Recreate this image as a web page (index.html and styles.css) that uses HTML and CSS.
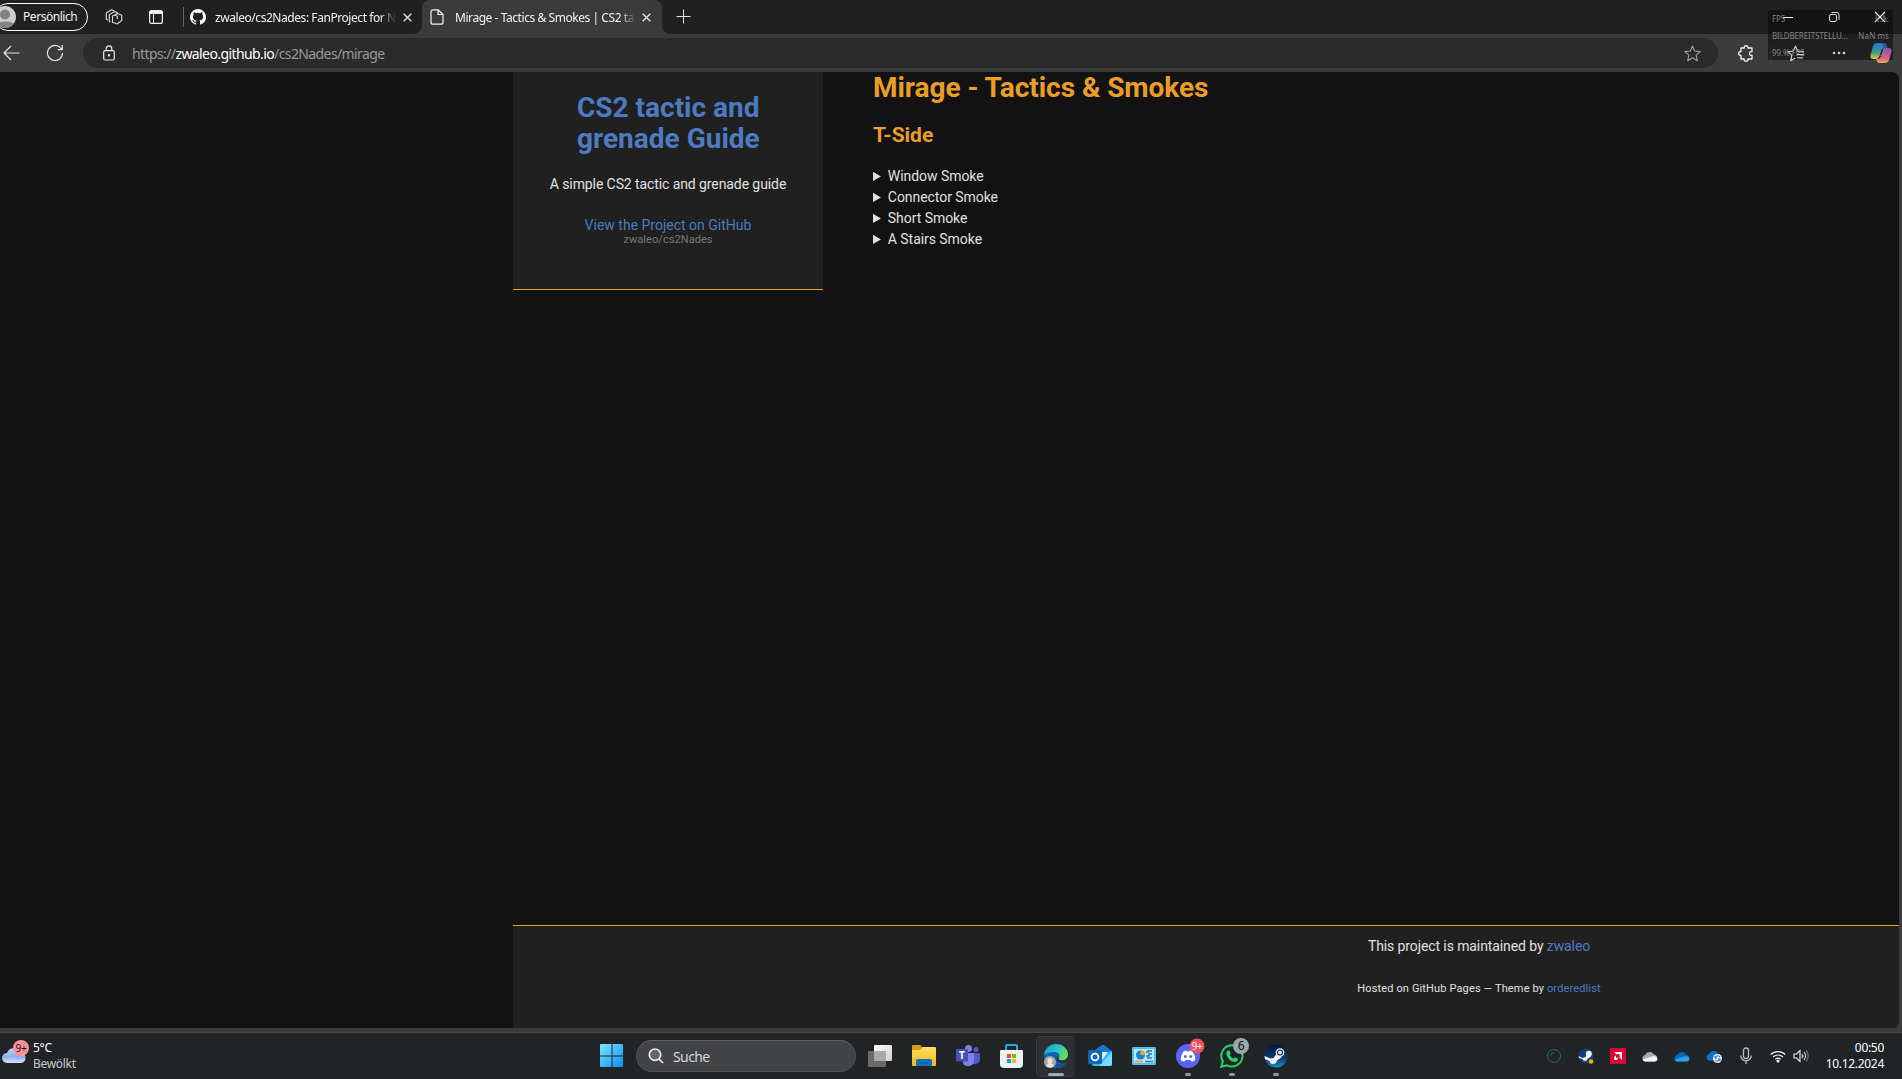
FILE: index.html
```html
<!DOCTYPE html>
<html lang="de">
<head>
<meta charset="utf-8">
<title>Mirage - Tactics &amp; Smokes | CS2 tactic and grenade Guide</title>
<link rel="stylesheet" href="styles.css">
</head>
<body>
<div class="desktop">
  <header class="tabstrip">
    <div class="profile">
      <svg class="avatar" width="22" height="22" viewBox="0 0 22 22"><circle cx="11" cy="11" r="11" fill="#cfcdca"/><circle cx="11" cy="8.5" r="5" fill="#858381"/><path d="M2.5 18c1-3.500 16-3.500 17 0A11 11 0 0 1 2.500 18z" fill="#858381"/></svg>
      <span class="profile-name">Persönlich</span>
    </div>
    <svg class="workspaces" width="18" height="18" viewBox="0 0 18 18" fill="none" stroke="#dcdcdc" stroke-width="1.1" stroke-linejoin="round"><path d="M7.500 8l5-2.500 4.200 1.700v5.300L12 16l-4.500-1.700zM9.500 7l2.800 1.200v3M5.500 14l-1.200-.6V6.600L9.500 3.500l3.500 1.400M3 12l-1.700-.8V5L6.500 1.700l3 1.200"/></svg>
    <svg class="tabactions" width="16" height="16" viewBox="0 0 16 16"><rect x="1.600" y="1.600" width="12.800" height="12.800" rx="2" fill="none" stroke="#eee" stroke-width="1.200"/><path d="M1.500 3.500q0-2 2-2h9q2 0 2 2V5h-13z" fill="#eee"/><path d="M5.500 5v9" stroke="#eee"/></svg>
    <i class="divider"></i>
    <div class="tab">
      <svg width="16" height="16" viewBox="0 0 16 16"><path fill="#fff" d="M8 0a8 8 0 0 0-2.530 15.590c.4.070.55-.17.55-.38v-1.490c-2.010.37-2.530-.49-2.690-.94-.09-.23-.48-.94-.82-1.130-.28-.15-.68-.52-.01-.53.63-.01 1.080.58 1.230.82.720 1.210 1.870.87 2.330.66.070-.52.280-.87.510-1.070-1.780-.2-3.640-.89-3.640-3.950 0-.87.31-1.590.82-2.150-.08-.2-.36-1.020.08-2.120 0 0 .67-.21 2.200.82a7.400 7.400 0 0 1 4 0c1.530-1.040 2.200-.82 2.200-.82.440 1.100.160 1.920.080 2.120.51.560.82 1.270.82 2.150 0 3.070-1.870 3.750-3.650 3.950.29.250.54.730.54 1.480v2.200c0 .21.150.46.550.38A8 8 0 0 0 8 0z"/></svg>
      <span class="tab-title">zwaleo/cs2Nades: FanProject for N</span>
      <svg class="close" width="9" height="9" viewBox="0 0 9 9"><path d="M.7.700l7.600 7.600M8.300.7L.7 8.300" stroke="#e8e8e8" stroke-width="1.300"/></svg>
    </div>
    <div class="tab active">
      <svg width="14" height="16" viewBox="0 0 14 16" fill="none" stroke="#f4f4f4" stroke-width="1.200"><path d="M8 .8H3Q1 .8 1 2.800v10.400q0 2 2 2h8q2 0 2-2V5.500zM8 .8v4.700h5" stroke-linejoin="round"/></svg>
      <span class="tab-title">Mirage - Tactics &amp; Smokes | CS2 ta</span>
      <svg class="close" width="9" height="9" viewBox="0 0 9 9"><path d="M.7.700l7.600 7.600M8.300.7L.7 8.300" stroke="#e8e8e8" stroke-width="1.300"/></svg>
    </div>
    <svg class="newtab" width="15" height="15" viewBox="0 0 15 15"><path d="M7.500.5v14M.5 7.500h14" stroke="#e0e0e0"/></svg>
    <div class="window-controls">
      <svg width="46" height="34" viewBox="0 0 46 34"><path d="M18 17.500h10" stroke="#eee"/></svg>
      <svg width="46" height="34" viewBox="0 0 46 34" fill="none" stroke="#d8d8d8"><rect x="18.500" y="14.500" width="7" height="7" rx="1.500"/><path d="M20.500 12.500h5.500q2 0 2 2v5.500"/></svg>
      <svg width="46" height="34" viewBox="0 0 46 34"><path d="M18 12l10 10M28 12L18 22" stroke="#f2f2f2" stroke-width="1.100"/></svg>
    </div>
  </header>

  <nav class="toolbar">
    <svg class="back" width="17" height="16" viewBox="0 0 17 16" fill="none" stroke="#e6e6e6" stroke-width="1.200"><path d="M16.500 8H1M8 1L1 8l7 7"/></svg>
    <svg class="reload" width="18" height="18" viewBox="0 0 18 18" fill="none" stroke="#e6e6e6" stroke-width="1.200"><path d="M16.500 9A7.500 7.500 0 1 1 14 3.400L16 5.500M16.200 1v4.700h-4.500"/></svg>
    <div class="address">
      <svg width="12" height="16" viewBox="0 0 12 16" fill="none" stroke="#ececec" stroke-width="1.200"><rect x=".7" y="5.700" width="10.600" height="9.300" rx="1.500"/><path d="M3.200 5.500V3.700a2.800 2.800 0 0 1 5.600 0v1.800"/><circle cx="6" cy="10.300" r=".6" fill="#ececec"/></svg>
      <span class="url">https://<b>zwaleo.github.io</b>/cs2Nades/mirage</span>
      <svg class="star" width="17" height="17" viewBox="0 0 17 17" fill="none" stroke="#a2a2a2" stroke-width="1.100" stroke-linejoin="round"><path d="M8.500 1l2.200 5 5.500.6-4.100 3.600 1.200 5.500-4.800-2.900-4.800 2.900 1.200-5.500L.8 6.600 6.300 6z"/></svg>
    </div>
    <svg class="puzzle" width="16" height="17" viewBox="0 0 16 17" fill="none" stroke="#f2f2f2" stroke-width="1.300" stroke-linejoin="round"><path d="M3 3h3.200c-.5-3 4.200-3 3.800 0H14v3.500c-3.300-.2-3.300 4.200 0 4V14h-4c.4 3-4.300 3-3.800 0H3v-3.500c-3.200.2-3.200-4.200 0-4z"/></svg>
    <i class="tool-divider"></i>
    <svg class="favorites" width="18" height="17" viewBox="0 0 18 17" fill="none" stroke="#c9c9c9" stroke-width="1.200" stroke-linejoin="round"><path d="M17 6.600H10.800L8.500 1 6.300 6 .8 6.600l4.100 3.600-1.200 5.500 4.500-2.700M10 9.700h7M10 12.800h6"/></svg>
    <svg class="dots" width="14" height="4" viewBox="0 0 14 4" fill="#cfcfcf"><circle cx="2" cy="2" r="1.300"/><circle cx="7" cy="2" r="1.300"/><circle cx="12" cy="2" r="1.300"/></svg>
    <svg class="copilot" width="22" height="20" viewBox="0 0 22 20"><defs><linearGradient id="ca" x2="0" y2="1"><stop stop-color="#2477d1"/><stop offset=".55" stop-color="#289d80"/><stop offset="1" stop-color="#d8d238"/></linearGradient><linearGradient id="cb" x2="0" y2="1"><stop stop-color="#8d48c7"/><stop offset=".6" stop-color="#da568b"/><stop offset="1" stop-color="#f3a35c"/></linearGradient></defs><path d="M6 0h8q2 0 3 4l-5 2-3 8q-1 2-3 2H3q-3 0-2.500-4L3 3q1-3 3-3z" fill="url(#ca)"/><path d="M12 0h3q1.500 0 2.500 5l-3.500 1z" fill="#2a52ae"/><path d="M15 5h4q3 0 2.500 4L19 17q-1 3-3 3H9q-2 0-3-4h2q2 0 3-3l2-6q.5-2 2-2z" fill="url(#cb)"/></svg>
  </nav>

  <div class="viewport">
    <div class="wrapper">
      <aside class="sidebar">
        <h1>CS2 tactic and grenade Guide</h1>
        <p class="tagline">A simple CS2 tactic and grenade guide</p>
        <p class="view"><a>View the Project on GitHub <small>zwaleo/cs2Nades</small></a></p>
      </aside>
      <section class="content">
        <h1>Mirage - Tactics &amp; Smokes</h1>
        <h2>T-Side</h2>
        <details><summary>Window Smoke</summary></details>
        <details><summary>Connector Smoke</summary></details>
        <details><summary>Short Smoke</summary></details>
        <details><summary>A Stairs Smoke</summary></details>
      </section>
    </div>
    <footer class="footer">
      <p class="maintained">This project is maintained by <a>zwaleo</a></p>
      <p class="hosted">Hosted on GitHub Pages — Theme by <a>orderedlist</a></p>
    </footer>
  </div>

  <footer class="taskbar">
    <div class="weather">
      <svg width="31" height="24" viewBox="0 0 31 24"><defs><linearGradient id="w" x2="0" y2="1"><stop stop-color="#b9d2f7"/><stop offset=".6" stop-color="#8fb2ea"/><stop offset="1" stop-color="#d7e5fb"/></linearGradient></defs><path d="M7 23a5 5 0 0 1 0-10A7.500 7.500 0 0 1 21 12.500 5.300 5.300 0 0 1 21 23z" fill="url(#w)"/><circle cx="21" cy="8" r="8" fill="#ff8f98"/><text x="21" y="12" class="badge-text dark">9+</text></svg>
      <div class="weather-text"><span>5°C</span><span class="dim">Bewölkt</span></div>
    </div>
    <div class="app start"><svg width="24" height="24" viewBox="0 0 24 24"><defs><linearGradient id="win" x2="1" y2="1"><stop stop-color="#7be9ff"/><stop offset="1" stop-color="#0a8df5"/></linearGradient></defs><path fill="url(#win)" d="M1 0h10.500v11.500H0V1q0-1 1-1zM12.500 0H22q1 0 1 1v10.500H12.500zM0 12.500h11.500V23H1q-1 0-1-1zM12.500 12.500H23V22q0 1-1 1h-9.500z"/></svg></div>
    <div class="search"><svg width="16" height="16" viewBox="0 0 16 16" fill="#66676c" stroke="#e9e9e9" stroke-width="1.700"><circle cx="7" cy="6.700" r="5.700"/><path d="M11 11l4 4"/></svg><span>Suche</span></div>
    <div class="app"><svg width="24" height="24" viewBox="0 0 24 24"><defs><linearGradient id="tv" x2="1" y2="1"><stop stop-color="#fff"/><stop offset="1" stop-color="#d0d0d0"/></linearGradient></defs><rect x="6" y="1" width="18" height="16" rx="1" fill="url(#tv)"/><rect y="7" width="18" height="16" rx="1" fill="#6a6a6a"/><rect x="6" y="7" width="12" height="10" fill="#aaa"/></svg></div>
    <div class="app"><svg width="24" height="24" viewBox="0 0 24 24"><defs><linearGradient id="fo" x2="0" y2="1"><stop stop-color="#ffdc66"/><stop offset="1" stop-color="#fbb917"/></linearGradient></defs><path d="M0 2q0-1 1-1h7l3 2.500V8H0z" fill="#dd9c0c"/><path d="M0 6h8l3-3h12q1 0 1 1v17q0 1-1 1H1q-1 0-1-1z" fill="url(#fo)"/><path d="M4 22v-5q0-2 2-2h12q2 0 2 2v5z" fill="#0b72c6"/><path d="M8 19h8" stroke="#07508f"/></svg></div>
    <div class="app"><svg width="24" height="24" viewBox="0 0 24 24"><circle cx="12.500" cy="4.500" r="3.500" fill="#7b83eb"/><circle cx="20" cy="5.500" r="2.500" fill="#5059c9"/><path d="M17 9h6q1 0 1 1v5q0 4-4 5h-3z" fill="#5059c9"/><path d="M8 9h10v7q0 6-6 6t-5-6z" fill="#7b83eb"/><rect y="5" width="12" height="12.500" rx="1" fill="#474eb7"/><text x="6" y="15" class="glyph">T</text></svg></div>
    <div class="app"><svg width="24" height="24" viewBox="0 0 24 24"><path d="M6 7V2q0-1 1-1h9q1 0 1 1v5" fill="none" stroke="#25a9e8" stroke-width="2"/><path d="M0 7q0-1 1-1h21q1 0 1 1v13q0 4-4 4H4q-4 0-4-4z" fill="#f1f1f1"/><path fill="#f04f22" d="M7 10h4v4H7z"/><path fill="#7fba00" d="M12 10h4v4h-4z"/><path fill="#00a4ef" d="M7 15h4v4H7z"/><path fill="#fdb900" d="M12 15h4v4h-4z"/></svg></div>
    <div class="app selected"><svg width="24" height="24" viewBox="0 0 24 24"><defs><linearGradient id="eg" x2="1" y2=".5"><stop stop-color="#1793d9"/><stop offset=".55" stop-color="#29c3c9"/><stop offset="1" stop-color="#66dd58"/></linearGradient></defs><circle cx="12" cy="12" r="12" fill="#0c65b4"/><path d="M0 11C1 4 6 0 12 0c7 0 12 5 12 10.500 0 4-3 6-6 6-2 0-4-1-3.500-2 2-2 1-6.500-4-6.500Q3 8 0 11z" fill="url(#eg)"/><path d="M10.500 10c-3 2-2 8 3 9.500 4 1 7 0 9-1.500l1-1v7H12z" fill="#155295"/><path d="M14.500 14.500c-.5 1 1.500 2 3.500 2 2 0 4-1 6-4v5l-1.500 1c-4 2-10 0-10-3q0-2 1-3.500 2 1.500 1 2.500z" fill="#2d2f33"/><path d="M22.500 18L24 17v7h-6.500q3.500-2 5-6z" fill="#2d2f33"/><circle cx="6" cy="18" r="6" fill="#a9a7a5"/><circle cx="6" cy="16.500" r="2.600" fill="#e3e1df"/><path d="M2.500 22q0-3 3.500-3t3.500 3q-3 3-7 0z" fill="#e3e1df"/></svg><i class="run wide"></i></div>
    <div class="app"><svg width="24" height="24" viewBox="0 0 24 24"><path d="M4 8l10-7q1-.7 2 0l8 6v13q0 2-2 2H6q-2 0-2-2z" fill="#1a78ce"/><path d="M4 15l9-3 11-5v13q0 2-2 2H6q-2 0-2-2z" fill="#39b9f4"/><path d="M11 22L24 8v12q0 2-2 2z" fill="#75dcff"/><path d="M14 8h6l-6 8z" fill="#d9f2ff"/><rect y="6" width="14" height="14" rx="1.500" fill="#0e66bd"/><circle cx="7" cy="13" r="3.400" fill="none" stroke="#fff" stroke-width="1.800"/></svg></div>
    <div class="app"><svg width="24" height="24" viewBox="0 0 24 24"><rect y="3" width="24" height="18" rx="1" fill="#53bce9"/><rect x="2" y="5" width="20" height="14" fill="#b9e6f8"/><circle cx="8.500" cy="11" r="4.500" fill="#1585d2"/><path d="M8.500 11V6a5 5 0 0 1 5 5z" fill="#f3a52d"/><path d="M14 8h2v-1h4M14 12h3v-2h3M15 14h5" stroke="#1c7cbc" fill="none" stroke-width="1.500"/><path d="M3 17.500h8" stroke="#e69a2e" stroke-width="1.500"/><path d="M13 17.500h8" stroke="#277eb2" stroke-width="1.500"/></svg></div>
    <div class="app"><svg width="24" height="24" viewBox="0 0 24 24"><circle cx="12" cy="12" r="12" fill="#5865f2"/><path d="M7.500 7.500q2-1 3-1l.5 1h2l.5-1q1 0 3 1 3 4 2.800 8.500-2 1.500-3.800 1.500L14.500 16h-5l-1 1.500q-2 0-3.800-1.500-.2-4.500 2.800-8.500z" fill="#fff"/><circle cx="9.300" cy="12.500" r="1.500" fill="#5865f2"/><circle cx="14.700" cy="12.500" r="1.500" fill="#5865f2"/></svg><svg class="badge" width="16" height="16" viewBox="0 0 16 16"><circle cx="8" cy="8" r="7.500" fill="#ee5158"/><text x="8" y="12" class="badge-text">9+</text></svg><i class="run"></i></div>
    <div class="app"><svg width="24" height="24" viewBox="0 0 24 24"><path d="M1.300 22.800l1.500-5.500A10.600 10.600 0 1 1 7 21.300z" fill="#202427" stroke="#25d366" stroke-width="2"/><path d="M7.500 6.500h2l1.300 3-1.200 1.500q1.300 2.500 4 3.800l1.400-1.600 3 1.500q0 3.300-3.500 3.300Q8 17 6.300 10q0-2.500 1.200-3.500z" fill="#25d366"/></svg><svg class="badge" width="16" height="16" viewBox="0 0 16 16"><circle cx="8" cy="8" r="8" fill="#9ba9ad"/><text x="8" y="12" class="badge-text dark six">6</text></svg><i class="run"></i></div>
    <div class="app"><svg width="24" height="24" viewBox="0 0 24 24"><defs><linearGradient id="st" x2="0" y2="1"><stop stop-color="#0a1735"/><stop offset=".6" stop-color="#0b3b73"/><stop offset="1" stop-color="#168fc9"/></linearGradient></defs><circle cx="12" cy="12" r="11.500" fill="url(#st)"/><path d="M.5 12l6 2.500 3-.5 3.500-5 5 4-5 3.500q-1 3.500-4 3.500t-3.500-3L.8 15z" fill="#f2f2f2"/><circle cx="16" cy="8.500" r="4.300" fill="#f2f2f2"/><circle cx="16" cy="8.500" r="2.500" fill="#e2e5e8" stroke="#173057" stroke-width="1.200"/></svg><i class="run"></i></div>
    <div class="tray">
      <span class="tray-item"><svg width="16" height="16" viewBox="0 0 16 16" fill="none" stroke="#22734a"><circle cx="8" cy="8" r="6.500"/><path d="M4.500 8A3.500 3.500 0 0 1 8 4.500"/></svg></span>
      <span class="tray-item"><svg width="16" height="16" viewBox="0 0 16 16"><circle cx="8" cy="8" r="7.500" fill="#133f75"/><path d="M.5 8l4 2 3-1 2-3.500 3.500 3-3.500 2.500q-.5 2-2.500 2t-2.500-2L1 10z" fill="#f2f2f2"/><circle cx="10.800" cy="5.700" r="3" fill="#f2f2f2"/><circle cx="13" cy="13.500" r="2.300" fill="#ecb016"/></svg></span>
      <span class="tray-item"><svg width="16" height="16" viewBox="0 0 16 16"><path d="M0 0h16v16H0z" fill="#dd0031"/><path d="M4 4h8v8l-2.300-2.300V6.300H6.300zM6 7.300v2.400h2.600L6.700 12H4V9.300z" fill="#fff"/></svg></span>
      <span class="tray-item"><svg width="16" height="11" viewBox="0 0 16 11"><path d="M3.500 10.500a3.300 3.300 0 0 1-.4-6.500A5 5 0 0 1 12 3.500a3.600 3.600 0 0 1 .5 7z" fill="#a9a9a9"/><path d="M3 10.500q-2-.5-2.500-2L10 5.500q5-1 5.500 2 0 3-3 3z" fill="#f4f4f4"/></svg></span>
      <span class="tray-item"><svg width="16" height="11" viewBox="0 0 16 11"><path d="M3.500 10.500a3.300 3.300 0 0 1-.4-6.500A5 5 0 0 1 12 3.500a3.600 3.600 0 0 1 .5 7z" fill="#0766b8"/><path d="M3 10.500q-2-.5-2.500-2L10 5.500q5-1 5.500 2 0 3-3 3z" fill="#29a0e8"/></svg></span>
      <span class="tray-item"><svg width="16" height="14" viewBox="0 0 16 14"><path d="M3.500 11.500a3.300 3.300 0 0 1-.4-6.500A5 5 0 0 1 12 4.500a3.600 3.600 0 0 1 .5 7z" fill="#0b73cc"/><circle cx="11.500" cy="9.500" r="4.500" fill="#e6f0f7"/><path d="M9 9a2.800 2.800 0 0 1 5-1M14 10a2.800 2.800 0 0 1-5 1M9 7v2h2M14 12v-2h-2" stroke="#1670bb" fill="none"/></svg></span>
      <span class="tray-item"><svg width="14" height="18" viewBox="0 0 14 18" fill="none" stroke="#b9bbbc" stroke-width="1.300"><rect x="4.500" y="1" width="5" height="10.500" rx="2.500"/><path d="M1.700 8.500a5.300 5.300 0 0 0 10.600 0M7 14v3"/></svg></span>
      <span class="tray-item wifi"><svg width="16" height="14" viewBox="0 0 16 14" fill="none" stroke="#f1f1f1" stroke-width="1.200"><path d="M.7 5.500a10.500 10.500 0 0 1 14.600 0M3 8a7.300 7.300 0 0 1 10 0M5.300 10.300a4 4 0 0 1 5.400 0"/><circle cx="8" cy="12" r="1" fill="#f1f1f1"/></svg></span>
      <span class="tray-item vol"><svg width="16" height="14" viewBox="0 0 16 14" fill="none" stroke="#f1f1f1" stroke-width="1.100"><path d="M1 5h2.500L7 1.500v11L3.500 9H1z"/><path d="M9 5a3 3 0 0 1 0 4M11 3a6 6 0 0 1 0 8"/><path d="M13 1.500a8 8 0 0 1 0 11" stroke="#777"/></svg></span>
      <div class="clock"><span>00:50</span><span>10.12.2024</span></div>
    </div>
  </footer>

  <div class="overlay">
    <span>FPS</span><span>k.A.</span>
    <span>BILDBEREITSTELLU...</span><span>NaN ms</span>
    <span>99.% FPS</span><span>k.A.</span>
  </div>
</div>
</body>
</html>
```
FILE: styles.css
```css
* { box-sizing: border-box; }
body { margin: 0; background: #3b3b3b; font-family: "Noto Sans", sans-serif; }
svg { display: block; flex: none; }
.desktop { position: relative; width: 1902px; height: 1079px; overflow: hidden; display: flex; flex-direction: column; }

.tabstrip { height: 34px; background: #202020; display: flex; align-items: center; color: #f2f2f2; font-size: 12px; flex: none; }
.profile { width: 94px; height: 28px; margin-left: -6px; margin-top: -1px; border: 1px solid #fff; border-radius: 14px; display: flex; align-items: center; flex: none; }
.avatar { margin-left: -1px; }
.profile-name { margin-left: 7px; letter-spacing: -0.45px; white-space: nowrap; }
.workspaces { margin-left: 17px; }
.tabactions { margin-left: 25px; }
.divider { width: 1px; height: 20px; background: #666; margin-left: 19px; }
.tab { width: 238px; height: 34px; display: flex; align-items: center; padding-left: 6px; flex: none; }
.tab-title { width: 182px; margin-left: 9px; overflow: hidden; white-space: nowrap; letter-spacing: -0.44px; mask-image: linear-gradient(90deg, #000 165px, transparent 181px); }
.close { margin-left: 6px; }
.tab.active { position: relative; width: 240px; background: #3b3b3b; border-radius: 8px 8px 0 0; padding-left: 8px; }
.tab.active::before, .tab.active::after { content: ""; position: absolute; bottom: 0; width: 8px; height: 8px; }
.tab.active::before { left: -8px; background: radial-gradient(circle at 0 0, transparent 7.500px, #3b3b3b 8px); }
.tab.active::after { right: -8px; background: radial-gradient(circle at 100% 0, transparent 7.500px, #3b3b3b 8px); }
.tab.active .tab-title { margin-left: 11px; width: 180px; }
.tab.active .close { margin-left: 7px; }
.newtab { margin-left: 14px; margin-top: -1px; }
.window-controls { display: flex; margin-left: auto; margin-right: -1px; }

.toolbar { height: 38px; background: #3b3b3b; display: flex; align-items: center; flex: none; }
.back { margin-left: 3px; }
.reload { margin-left: 26px; }
.address { width: 1635px; height: 30px; margin-left: 19px; padding-left: 20px; background: #2a2a2a; border-radius: 15px; display: flex; align-items: center; flex: none; }
.url { margin-left: 17px; color: #999; font-size: 14px; letter-spacing: -0.6px; }
.url b { color: #fff; font-weight: 400; }
.star { margin-left: auto; margin-right: 17px; }
.puzzle { margin-left: 20px; }
.tool-divider { width: 1px; height: 16px; background: #545454; margin-left: 16px; }
.favorites { margin-left: 16px; }
.dots { margin-left: 27px; }
.copilot { margin-left: 24px; }
.window-controls, .favorites, .dots, .copilot { position: relative; z-index: 2; }

.viewport { height: 956px; width: 1899px; background: #121212; border-radius: 0 7px 7px 0; overflow: hidden; display: flex; flex-direction: column; justify-content: space-between; flex: none; font: 14px/21px Roboto, sans-serif; color: #e0e0e0; }
.viewport h1, .viewport h2 { margin: 0; font-weight: 700; }
.viewport p { margin: 0; }
.viewport a { color: #4d7bc1; }
.wrapper { display: flex; padding-left: 513px; gap: 50px; }
.sidebar { width: 310px; height: 218px; background: #202020; border-bottom: 1px solid #eb9e25; text-align: center; padding-top: 20px; }
.sidebar h1 { color: #4d7bc1; font-size: 28px; line-height: 31px; width: 190px; margin: 0 auto; text-align: left; padding-left: 4px; }
.tagline { padding-top: 20px; letter-spacing: -.09px; }
.view { padding-top: 20px; }
.view a { display: block; }
.view small { display: block; font-size: 11px; line-height: 11px; color: #777; margin-top: -2px; letter-spacing: .07px; }
.content h1 { color: #eb9e25; font-size: 28px; line-height: 31px; letter-spacing: -.05px; }
.content h2 { color: #eb9e25; font-size: 21px; line-height: 25px; margin: 20px 0 18px; }
.content details { letter-spacing: -.05px; }
.footer { height: 103px; margin-left: 513px; background: #202020; border-top: 1px solid #eb9e25; padding: 10px 0 0 546px; text-align: center; }
.maintained { letter-spacing: -.1px; }
.footer .hosted { font-size: 11px; margin-top: 21px; letter-spacing: .14px; }

.taskbar { height: 47px; margin-top: auto; background: #202427; border-top: 1px solid #484848; display: flex; align-items: center; color: #fff; font-size: 12px; flex: none; }
.weather { width: 590px; display: flex; align-items: center; }
.weather svg { margin-top: -8px; }
.weather-text { display: flex; flex-direction: column; line-height: 16px; margin-left: 2px; letter-spacing: -.3px; }
.dim { color: #c8c9ca; }
.app { position: relative; width: 44px; height: 46px; display: flex; align-items: center; justify-content: center; flex: none; }
.search { width: 220px; height: 32px; margin: 0 2px; background: #424347; border: 1px solid #505155; border-top-color: #626367; border-radius: 16px; display: flex; align-items: center; gap: 9px; padding-left: 11px; color: #d8d8d8; font-size: 14px; letter-spacing: -.6px; }
.selected { background: #2d2f33; width: 40px; height: 41px; border-radius: 5px; margin: 0 2px; border: 1px solid #3a3c40; border-right: 2px solid #24262a; }
.run { position: absolute; left: 19px; bottom: 3px; width: 6px; height: 3px; border-radius: 2px; background: #96999c; }
.run.wide { left: 11px; bottom: 0; width: 16px; background: #9eabb2; }
.badge { position: absolute; left: 23px; top: 5px; }
.badge-text { font: 10px "Noto Sans", sans-serif; fill: #fff; text-anchor: middle; letter-spacing: -.3px; }
.badge-text.dark { fill: #111; }
.badge-text.six { font-size: 12px; }
.glyph { font: 700 10px "Noto Sans", sans-serif; fill: #fff; text-anchor: middle; }
.tray { margin-left: auto; display: flex; align-items: center; padding-right: 18px; }
.tray-item { width: 32px; display: flex; justify-content: center; flex: none; }
.wifi { width: 24px; margin-left: 4px; }
.vol { width: 22px; }
.clock { width: 72px; display: flex; flex-direction: column; align-items: flex-end; line-height: 16px; letter-spacing: -.3px; }

/* performance metrics panel: backdrop sits under the toolbar icons, labels over them */
.overlay { position: absolute; left: 1768px; top: 10px; width: 125px; height: 50px; color: #858585; font-size: 8px; line-height: 17px; padding: 0 4px; display: grid; grid-template-columns: 1fr auto; align-content: start; }
.overlay::before { content: ""; position: absolute; inset: 0; background: rgba(10, 10, 10, .55); z-index: 1; }
.overlay span { z-index: 3; letter-spacing: -.12px; }
.overlay span:nth-child(even) { text-align: right; letter-spacing: .1px; }
```
